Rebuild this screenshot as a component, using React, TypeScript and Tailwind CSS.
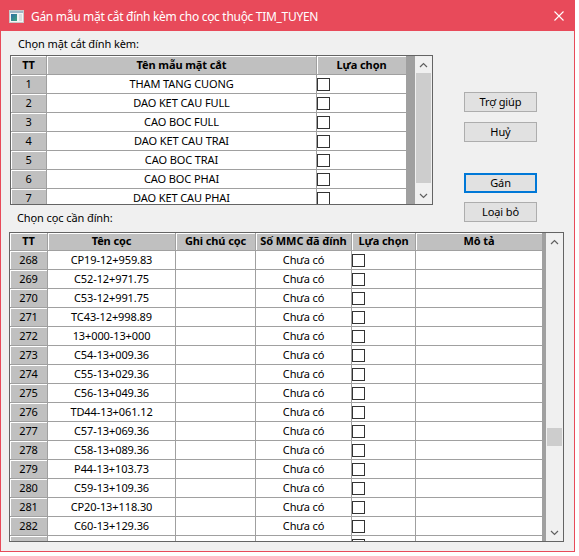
import React from "react";

const picks = [
  "THAM TANG CUONG",
  "DAO KET CAU FULL",
  "CAO BOC FULL",
  "DAO KET CAU TRAI",
  "CAO BOC TRAI",
  "CAO BOC PHAI",
  "DAO KET CAU PHAI",
];

const stakes: [number, string][] = [
  [268, "CP19-12+959.83"],
  [269, "C52-12+971.75"],
  [270, "C53-12+991.75"],
  [271, "TC43-12+998.89"],
  [272, "13+000-13+000"],
  [273, "C54-13+009.36"],
  [274, "C55-13+029.36"],
  [275, "C56-13+049.36"],
  [276, "TD44-13+061.12"],
  [277, "C57-13+069.36"],
  [278, "C58-13+089.36"],
  [279, "P44-13+103.73"],
  [280, "C59-13+109.36"],
  [281, "CP20-13+118.30"],
  [282, "C60-13+129.36"],
  [283, "TC44-13+146.35"],
];

const Chevron = ({ up }: { up?: boolean }) => (
  <svg width="9" height="6" viewBox="0 0 9 6">
    <polyline
      points={up ? "1,5 4.5,1.5 8,5" : "1,1 4.5,4.5 8,1"}
      fill="none"
      stroke="#606060"
      strokeWidth="1.2"
    />
  </svg>
);

const ScrollBar = ({ thumbTop, thumbHeight }: { thumbTop: number; thumbHeight: number }) => (
  <div className="flex w-[17px] shrink-0 flex-col bg-[#f0f0f0]">
    <div className="flex h-[17px] items-center justify-center">
      <Chevron up />
    </div>
    <div className="flex-1">
      <div
        className="mx-[1px] w-[15px] bg-[#cdcdcd]"
        style={{ marginTop: thumbTop, height: thumbHeight }}
      />
    </div>
    <div className="flex h-[17px] items-center justify-center">
      <Chevron />
    </div>
  </div>
);

const CheckBox = () => (
  <div className="h-[13px] w-[13px] border border-[#333333] bg-white" />
);

// text cells get a little bottom padding so glyphs sit like the WinForms grid
const headCell =
  "flex shrink-0 items-center justify-center whitespace-nowrap pb-[2px] border-r border-b border-[#a0a0a0] bg-[#c0c0c0] shadow-[inset_1px_1px_0_#ffffff]";
const cell =
  "flex shrink-0 items-center whitespace-nowrap border-r border-b border-[#a0a0a0] bg-white";

const Button = ({ label, active }: { label: string; active?: boolean }) => (
  <div
    className={`flex h-[20px] w-[73px] items-center justify-center pb-[1px] bg-[#e1e1e1] ${active ? "border-2 border-[#0078d7]" : "border border-[#adadad]"}`}
  >
    {label}
  </div>
);

export default function App() {
  return (
    <div className="bg-white font-['Noto_Sans',sans-serif] text-[11px] leading-none tracking-[-0.1px] text-black">
      <div className="flex h-[552px] w-[575px] flex-col border border-[#e84a5a]">
        {/* title bar */}
        <div className="flex h-[30px] shrink-0 items-center bg-[#e84a5a] text-white">
          <svg className="ml-[8px]" width="15" height="13" viewBox="0 0 15 13">
            <rect x="0.5" y="0.5" width="14" height="12" fill="#f4f4f4" stroke="#c8c8c8" />
            <rect x="1" y="1" width="13" height="2" fill="#9fb6c6" />
            <defs>
              <linearGradient id="ic" x1="0" y1="0" x2="1" y2="1">
                <stop offset="0" stopColor="#2f6fa8" />
                <stop offset="1" stopColor="#3fa37a" />
              </linearGradient>
            </defs>
            <rect x="2" y="4" width="6" height="7" fill="url(#ic)" />
            <rect x="10" y="4" width="3" height="7" fill="#d9dde0" />
          </svg>
          <span className="ml-[7px] mt-[1px] text-[12px] tracking-[-0.3px]">
            Gán mẫu mặt cắt đính kèm cho cọc thuộc TIM_TUYEN
          </span>
          <svg className="ml-auto mr-[10px]" width="10" height="10" viewBox="0 0 10 10">
            <path d="M0.5 0.5 L9.5 9.5 M9.5 0.5 L0.5 9.5" stroke="#ffffff" strokeWidth="1.1" />
          </svg>
        </div>

        {/* body */}
        <div className="flex flex-1 flex-col bg-[#f0f0f0]">
          <div className="flex">
            <div className="flex flex-col">
              <div className="mt-[5px] h-[16px] pl-[17px] leading-[16px]">
                Chọn mặt cắt đính kèm:
              </div>
              <div className="ml-[9px] mt-[3px] flex h-[150px] w-[423px] overflow-hidden border border-[#646464] bg-white">
                <div className="flex w-[396px] flex-col">
                  <div className="flex h-[19px] shrink-0 font-bold">
                    <div className={`${headCell} w-[36px]`}>TT</div>
                    <div className={`${headCell} w-[270px]`}>Tên mẫu mặt cắt</div>
                    <div className={`${headCell} w-[90px]`}>Lựa chọn</div>
                  </div>
                  {picks.map((name, i) => (
                    <div key={name} className="flex h-[19px] shrink-0">
                      <div className={`${headCell} w-[36px]`}>{i + 1}</div>
                      <div className={`${cell} w-[270px] justify-center pb-[2px]`}>{name}</div>
                      <div className={`${cell} w-[90px]`}>
                        <CheckBox />
                      </div>
                    </div>
                  ))}
                </div>
                <div className="w-[8px] shrink-0 bg-[#a0a0a0]" />
                <ScrollBar thumbTop={0} thumbHeight={110} />
              </div>
              <div className="mt-[5px] h-[16px] pl-[16px] leading-[16px]">
                Chọn cọc cần đính:
              </div>
            </div>
            <div className="ml-[31px] mt-[61px] flex flex-col">
              <Button label="Trợ giúp" />
              <div className="mt-[10px]">
                <Button label="Huỷ" />
              </div>
              <div className="mt-[31px]">
                <Button label="Gán" active />
              </div>
              <div className="mt-[9px]">
                <Button label="Loại bỏ" />
              </div>
            </div>
          </div>

          <div className="ml-[8px] mt-[6px] flex h-[310px] w-[555px] overflow-hidden border border-[#646464] bg-white">
            <div className="flex w-[533px] flex-col">
              <div className="flex h-[18px] shrink-0 font-bold">
                <div className={`${headCell} w-[38px]`}>TT</div>
                <div className={`${headCell} w-[128px]`}>Tên cọc</div>
                <div className={`${headCell} w-[80px]`}>Ghi chú cọc</div>
                <div className={`${headCell} w-[96px]`}>Số MMC đã đính</div>
                <div className={`${headCell} w-[64px]`}>Lựa chọn</div>
                <div className={`${headCell} w-[127px]`}>Mô tả</div>
              </div>
              {stakes.map(([no, name]) => (
                <div key={no} className="flex h-[19px] shrink-0">
                  <div className={`${headCell} w-[38px]`}>{no}</div>
                  <div className={`${cell} w-[128px] justify-center pb-[2px]`}>{name}</div>
                  <div className={`${cell} w-[80px]`} />
                  <div className={`${cell} w-[96px] justify-center pb-[2px]`}>Chưa có</div>
                  <div className={`${cell} w-[64px]`}>
                    <CheckBox />
                  </div>
                  <div className={`${cell} w-[127px]`} />
                </div>
              ))}
            </div>
            <div className="w-[3px] shrink-0 bg-[#a0a0a0]" />
            <ScrollBar thumbTop={178} thumbHeight={18} />
          </div>
        </div>
      </div>
    </div>
  );
}
